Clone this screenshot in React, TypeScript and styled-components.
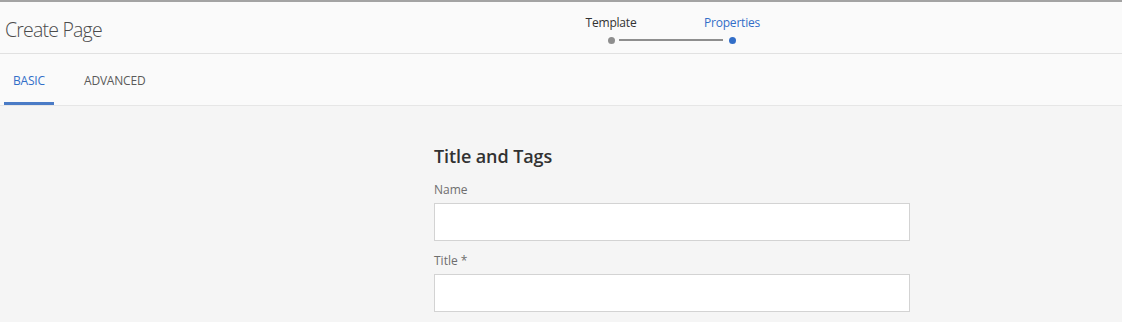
import React from "react";
import styled, { createGlobalStyle } from "styled-components";

const Global = createGlobalStyle`
  html, body { margin: 0; padding: 0; background: #f5f5f5; }
  body { font-family: "Open Sans", "Liberation Sans", sans-serif; }
  * { box-sizing: border-box; }
`;

const Page = styled.div`
  width: 1122px;
  height: 322px;
  overflow: hidden;
  border-top: 2px solid #a3a3a3;
  background: #f5f5f5;
`;

const Header = styled.header`
  height: 52px;
  background: #fafafa;
  border-bottom: 1px solid #e1e1e1;
  display: grid;
  grid-template-columns: 581px auto 1fr;
  align-items: center;
`;

const Title = styled.h1`
  margin: 0 0 0 5px;
  font-size: 19.5px;
  font-weight: 300;
  color: #4b4b4b;
  letter-spacing: -0.8px;
  padding-top: 3px;
`;

const Stepper = styled.div`
  display: flex;
  align-items: flex-start;
`;

const Step = styled.div<{ $active?: boolean }>`
  display: flex;
  flex-direction: column;
  align-items: center;
  width: 60px;
  font-size: 12px;
  letter-spacing: -0.2px;
  color: ${(p) => (p.$active ? "#326ec8" : "#323232")};
`;

const StepLabel = styled.span`
  height: 18px;
  line-height: 18px;
  margin-top: 3px;
  white-space: nowrap;
`;

const Dot = styled.span<{ $active?: boolean }>`
  margin-top: 5px;
  width: 7px;
  height: 7px;
  border-radius: 50%;
  background: ${(p) => (p.$active ? "#326ec8" : "#8e8e8e")};
`;

const Connector = styled.span`
  width: 104px;
  height: 2px;
  background: #8e8e8e;
  margin: 28px -21px 0 -22px;
`;

const Tabs = styled.nav`
  height: 52px;
  background: #fafafa;
  border-bottom: 1px solid #e6e6e6;
  display: flex;
  padding-left: 4px;
  gap: 21px;
`;

const Tab = styled.div<{ $active?: boolean }>`
  display: flex;
  align-items: center;
  padding: 1px 9px 0;
  width: ${(p) => (p.$active ? "50px" : "auto")};
  font-size: 12px;
  letter-spacing: -0.2px;
  color: ${(p) => (p.$active ? "#326ec8" : "#5a5a5a")};
  box-shadow: ${(p) => (p.$active ? "inset 0 -3px 0 #4a7bc6" : "none")};
`;

const Content = styled.main`
  width: 476px;
  margin: 0 0 0 434px;
  padding-top: 38px;
`;

const SectionTitle = styled.h2`
  margin: 0 0 13px;
  font-size: 18px;
  font-weight: 600;
  color: #323232;
  line-height: 24px;
  letter-spacing: -0.1px;
`;

const Field = styled.div`
  display: flex;
  flex-direction: column;
  margin-bottom: 11px;
`;

const Label = styled.label`
  font-size: 12px;
  color: #6e6e6e;
  line-height: 18px;
  margin-bottom: 4px;
`;

const Input = styled.input`
  height: 38px;
  width: 100%;
  border: 1px solid #d3d3d3;
  background: #fff;
  border-radius: 0;
  outline: none;
  font: inherit;
`;

export default function App() {
  return (
    <>
      <Global />
      <Page>
        <Header>
          <Title>Create Page</Title>
          <Stepper>
            <Step>
              <StepLabel>Template</StepLabel>
              <Dot />
            </Step>
            <Connector />
            <Step $active>
              <StepLabel>Properties</StepLabel>
              <Dot $active />
            </Step>
          </Stepper>
          <div />
        </Header>
        <Tabs>
          <Tab $active>BASIC</Tab>
          <Tab>ADVANCED</Tab>
        </Tabs>
        <Content>
          <SectionTitle>Title and Tags</SectionTitle>
          <Field>
            <Label>Name</Label>
            <Input />
          </Field>
          <Field>
            <Label>Title *</Label>
            <Input />
          </Field>
        </Content>
      </Page>
    </>
  );
}
